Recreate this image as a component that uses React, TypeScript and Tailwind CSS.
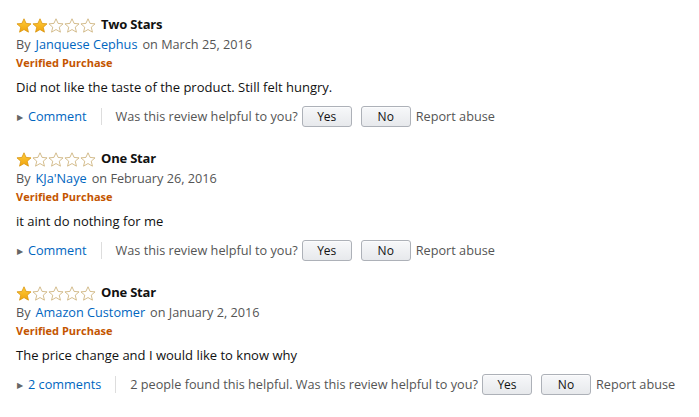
import React from 'react'

const reviews = [
  { stars: 2, title: 'Two Stars', author: 'Janquese Cephus', date: 'March 25, 2016', body: 'Did not like the taste of the product. Still felt hungry.', comments: 'Comment', helpful: '' },
  { stars: 1, title: 'One Star', author: "KJa'Naye", date: 'February 26, 2016', body: 'it aint do nothing for me', comments: 'Comment', helpful: '' },
  { stars: 1, title: 'One Star', author: 'Amazon Customer', date: 'January 2, 2016', body: 'The price change and I would like to know why', comments: '2 comments', helpful: '2 people found this helpful. ' },
]

function Star({ filled }: { filled: boolean }) {
  return (
    <svg width="16" height="15" viewBox="0 0 24 23">
      <defs>
        <linearGradient id="sg" x1="0" y1="0" x2="0" y2="1">
          <stop offset="0" stopColor="#ffce3d" />
          <stop offset="1" stopColor="#f0a30c" />
        </linearGradient>
      </defs>
      <path
        d="M12 1.2l3.2 7.1 7.6.7-5.8 5.1 1.8 7.6L12 17.7l-6.8 4 1.8-7.6L1.2 9l7.6-.7z"
        fill={filled ? 'url(#sg)' : 'none'}
        stroke={filled ? '#d9930b' : '#c8ab6e'}
        strokeWidth="1.2"
        strokeLinejoin="round"
      />
    </svg>
  )
}

function Button({ label }: { label: string }) {
  return (
    <button className="h-[21px] w-[50px] rounded-[3px] border border-[#adb1b8] bg-gradient-to-b from-[#f7f8fa] to-[#e7e9ec] text-[12px] font-medium text-[#111] shadow-[inset_0_1px_0_rgba(255,255,255,0.6)]">
      {label}
    </button>
  )
}

export default function App() {
  return (
    <div className="w-[699px] h-[417px] bg-white pl-[16px] pt-[15px] text-[13px] text-[#111]" style={{ fontFamily: '"Open Sans", Arial, sans-serif' }}>
      {reviews.map((r, i) => (
        <div key={i} className="h-[134px]">
          <div className="flex items-center h-[20px]">
            <div className="flex">
              {[0, 1, 2, 3, 4].map(n => <Star key={n} filled={n < r.stars} />)}
            </div>
            <span className="ml-[5px] font-bold tracking-[-0.2px]">{r.title}</span>
          </div>
          <div className="flex items-center h-[19px] text-[#555] text-[12.7px]">
            By<span className="ml-[5px] text-[#0066c0]">{r.author}</span>
            <span className="ml-[5px]">on {r.date}</span>
          </div>
          <div className="flex items-center h-[18px] text-[11px] font-bold text-[#c45500]">Verified Purchase</div>
          <div className="flex items-center h-[20px] mt-[6px]">{r.body}</div>
          <div className="flex items-center h-[21px] mt-[8px] text-[#555] text-[12.7px]">
            <span className="text-[8px] text-[#666] ml-[1px] mr-[5px]">▶</span>
            <span className="text-[#0066c0]">{r.comments}</span>
            <span className="mx-[14px] h-[17px] w-px bg-[#ddd]" />
            <span className="mr-[4px]">{r.helpful}Was this review helpful to you?</span>
            <Button label="Yes" />
            <span className="w-[9px]" />
            <Button label="No" />
            <span className="ml-[5px] text-[#555]">Report abuse</span>
          </div>
        </div>
      ))}
    </div>
  )
}
